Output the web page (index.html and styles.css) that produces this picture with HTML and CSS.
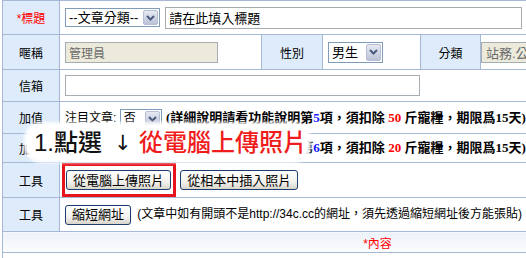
FILE: index.html
```html
<!DOCTYPE html>
<html lang="zh-Hant">
<head>
    <meta charset="UTF-8">
    <title>發表文章</title>
    <link rel="stylesheet" href="styles.css">
</head>
<body>
<div class="wrap">
    <table class="post-form">
        <colgroup>
            <col class="w-label">
            <col class="w-nick">
            <col class="w-sex-label">
            <col class="w-sex">
            <col class="w-cat-label">
            <col class="w-cat">
        </colgroup>
        <tr class="r-title">
            <th class="req">*標題</th>
            <td colspan="5">
                <span class="dd dd-cat"><span class="dd-text">--文章分類--</span><span class="dd-btn"><svg width="9" height="6" viewBox="0 0 9 6"><path d="M1 1l3.5 3.5L8 1" fill="none" stroke="#4a5a7c" stroke-width="2"/></svg></span></span>
                <input class="txt txt-title" type="text" value="請在此填入標題">
            </td>
        </tr>
        <tr class="r-nick">
            <th>暱稱</th>
            <td><input class="txt txt-off txt-nick" type="text" value="管理員" disabled></td>
            <th>性別</th>
            <td><span class="dd dd-sex"><span class="dd-text">男生</span><span class="dd-btn"><svg width="9" height="6" viewBox="0 0 9 6"><path d="M1 1l3.5 3.5L8 1" fill="none" stroke="#4a5a7c" stroke-width="2"/></svg></span></span></td>
            <th>分類</th>
            <td><input class="txt txt-off txt-cat" type="text" value="站務.公告" disabled></td>
        </tr>
        <tr class="r-mail">
            <th>信箱</th>
            <td colspan="5"><input class="txt txt-mail" type="text"></td>
        </tr>
        <tr class="r-plus">
            <th>加值</th>
            <td colspan="5">
                注目文章: <span class="dd dd-yn"><span class="dd-text">否</span><span class="dd-btn"><svg width="9" height="6" viewBox="0 0 9 6"><path d="M1 1l3.5 3.5L8 1" fill="none" stroke="#4a5a7c" stroke-width="2"/></svg></span></span>
                <span class="note">(詳細說明請看功能說明第<span class="blue">5</span>項，須扣除 <span class="red">50</span> 斤寵糧，期限爲15天)</span>
            </td>
        </tr>
        <tr class="r-plus2">
            <th>加值</th>
            <td colspan="5">
                置頂文章: <span class="dd dd-yn"><span class="dd-text">否</span><span class="dd-btn"><svg width="9" height="6" viewBox="0 0 9 6"><path d="M1 1l3.5 3.5L8 1" fill="none" stroke="#4a5a7c" stroke-width="2"/></svg></span></span>
                <span class="note">(詳細說明請看功能說明第<span class="blue">6</span>項，須扣除 <span class="red">20</span> 斤寵糧，期限爲15天)</span>
            </td>
        </tr>
        <tr class="r-upload">
            <th>工具</th>
            <td colspan="5">
                <span class="mark"><button class="xp-btn" type="button">從電腦上傳照片</button></span>
                <button class="xp-btn" type="button">從相本中插入照片</button>
            </td>
        </tr>
        <tr class="r-short">
            <th>工具</th>
            <td colspan="5">
                <button class="xp-btn" type="button">縮短網址</button>
                <span class="hint">(文章中如有開頭不是http://34c.cc的網址，須先透過縮短網址後方能張貼)</span>
            </td>
        </tr>
        <tr class="r-content">
            <td colspan="6" class="content-head">*內容</td>
        </tr>
        <tr class="r-editor">
            <td colspan="6"></td>
        </tr>
    </table>

    <div class="callout">
        <span class="step">1.點選</span>
        <span class="arrow">↓</span>
        <span class="step-red">從電腦上傳照片</span>
    </div>
</div>
</body>
</html>
```

FILE: styles.css
```css
body {
    margin: 0;
    font-family: "Liberation Sans", "Noto Sans CJK TC", sans-serif;
    font-size: 12px;
    color: #000;
    background-color: #fff;
    overflow: hidden;
}

.wrap {
    position: relative;
    padding-left: 2px;
}

.post-form {
    border-collapse: collapse;
    table-layout: fixed;
    width: 750px;
}

.w-label { width: 57px; }
.w-nick { width: 202px; }
.w-sex-label { width: 61px; }
.w-sex { width: 98px; }
.w-cat-label { width: 60px; }
.w-cat { width: 272px; }

.post-form th,
.post-form td {
    border: 1px solid #a5b9d6;
    padding: 0 5px;
    white-space: nowrap;
    overflow: hidden;
}

.post-form th {
    background-color: #deebfb;
    font-weight: normal;
    text-align: center;
    padding: 0;
}

.post-form th.req {
    color: #f00;
}

.r-title td, .r-title th { height: 33px; }
.r-nick td, .r-nick th { height: 34px; }
.r-mail td, .r-mail th { height: 31px; }
.r-plus td, .r-plus th { height: 31px; }
.r-plus2 td, .r-plus2 th { height: 28px; }
.r-upload td, .r-upload th { height: 32px; }
.r-short td, .r-short th { height: 33px; }
.r-content td { height: 20px; }
.r-editor td { height: 40px; }

/* text inputs */
.txt {
    box-sizing: border-box;
    height: 21px;
    border: 1px solid #a5acb2;
    padding: 1px 3px;
    font-family: "Liberation Sans", "Noto Sans CJK TC", sans-serif;
    font-size: 12px;
    color: #000;
    background-color: #fff;
    vertical-align: middle;
    margin: 0;
}

.txt-title {
    width: 357px;
    height: 22px;
    font-size: 13px;
    margin-left: 2px;
}

.txt-off {
    background-color: #ebeadb;
    color: #6b6b6b;
}

.txt-nick { width: 153px; }
.txt-cat { width: 200px; font-size: 13px; padding-left: 4px; }
.txt-mail { width: 355px; }

.r-nick td:last-child { padding-left: 0; }

/* xp style dropdowns */
.dd {
    display: inline-flex;
    align-items: center;
    box-sizing: border-box;
    height: 19px;
    border: 1px solid #7f9db9;
    background-color: #fff;
    vertical-align: middle;
    padding: 1px;
}

.dd-text {
    padding: 0 3px 0 2px;
    line-height: 15px;
}

.dd-cat { font-size: 13px; width: 95px; justify-content: space-between; }
.dd-sex { font-size: 13px; width: 55px; height: 21px; justify-content: space-between; }
.dd-yn { width: 42px; justify-content: space-between; }

.dd-btn {
    display: flex;
    align-items: center;
    justify-content: center;
    width: 15px;
    height: 100%;
    box-sizing: border-box;
    border: 1px solid #b7bfd4;
    border-radius: 2px;
    background: linear-gradient(#e6e9f2, #bcc3d8);
}

/* bold notes */
.note {
    font-family: "Liberation Serif", "Noto Sans CJK TC", serif;
    font-weight: bold;
    font-size: 13px;
    margin-left: 1px;
}

.blue { color: #1515ff; }
.red { color: #f00; }

.hint {
    margin-left: 3px;
}

/* buttons */
.xp-btn {
    box-sizing: border-box;
    height: 20px;
    padding: 0 6px;
    border: 1px solid #1c3f6e;
    border-radius: 3px;
    background: linear-gradient(#ffffff, #f3f2ee 60%, #d9d5cb);
    font-family: "Liberation Sans", "Noto Sans CJK TC", sans-serif;
    font-size: 13px;
    line-height: 17px;
    color: #000;
    vertical-align: middle;
    margin: 0;
}

.mark {
    display: inline-block;
    border: 3px solid #e8141c;
    padding: 4px 2px 4px 1px;
    margin-left: -3px;
    vertical-align: middle;
}

.mark + .xp-btn { margin-left: 1px; }

.content-head {
    text-align: center;
    color: #f00;
    background: linear-gradient(#edf2f9, #fbfcfe);
}

/* hint bubble over the form */
.callout {
    position: absolute;
    left: 27px;
    top: 125px;
    width: 281px;
    height: 35px;
    display: flex;
    align-items: center;
    padding-left: 7px;
    box-sizing: border-box;
    background-color: #fff;
    border-radius: 14px;
    box-shadow: 0 0 3px 3px rgba(255, 255, 255, 0.9);
    font-family: "Liberation Sans", "Noto Sans CJK TC", sans-serif;
    font-size: 24px;
    font-weight: 500;
    line-height: 28px;
}

.step {
    width: 69px;
    color: #111;
}

.arrow {
    width: 15px;
    margin-left: 11px;
    margin-right: 10px;
    text-align: center;
    font-family: "DejaVu Sans", sans-serif;
    font-size: 21px;
    font-weight: normal;
    color: #111;
}

.step-red {
    color: #f01c1c;
    letter-spacing: 0;
}
```
